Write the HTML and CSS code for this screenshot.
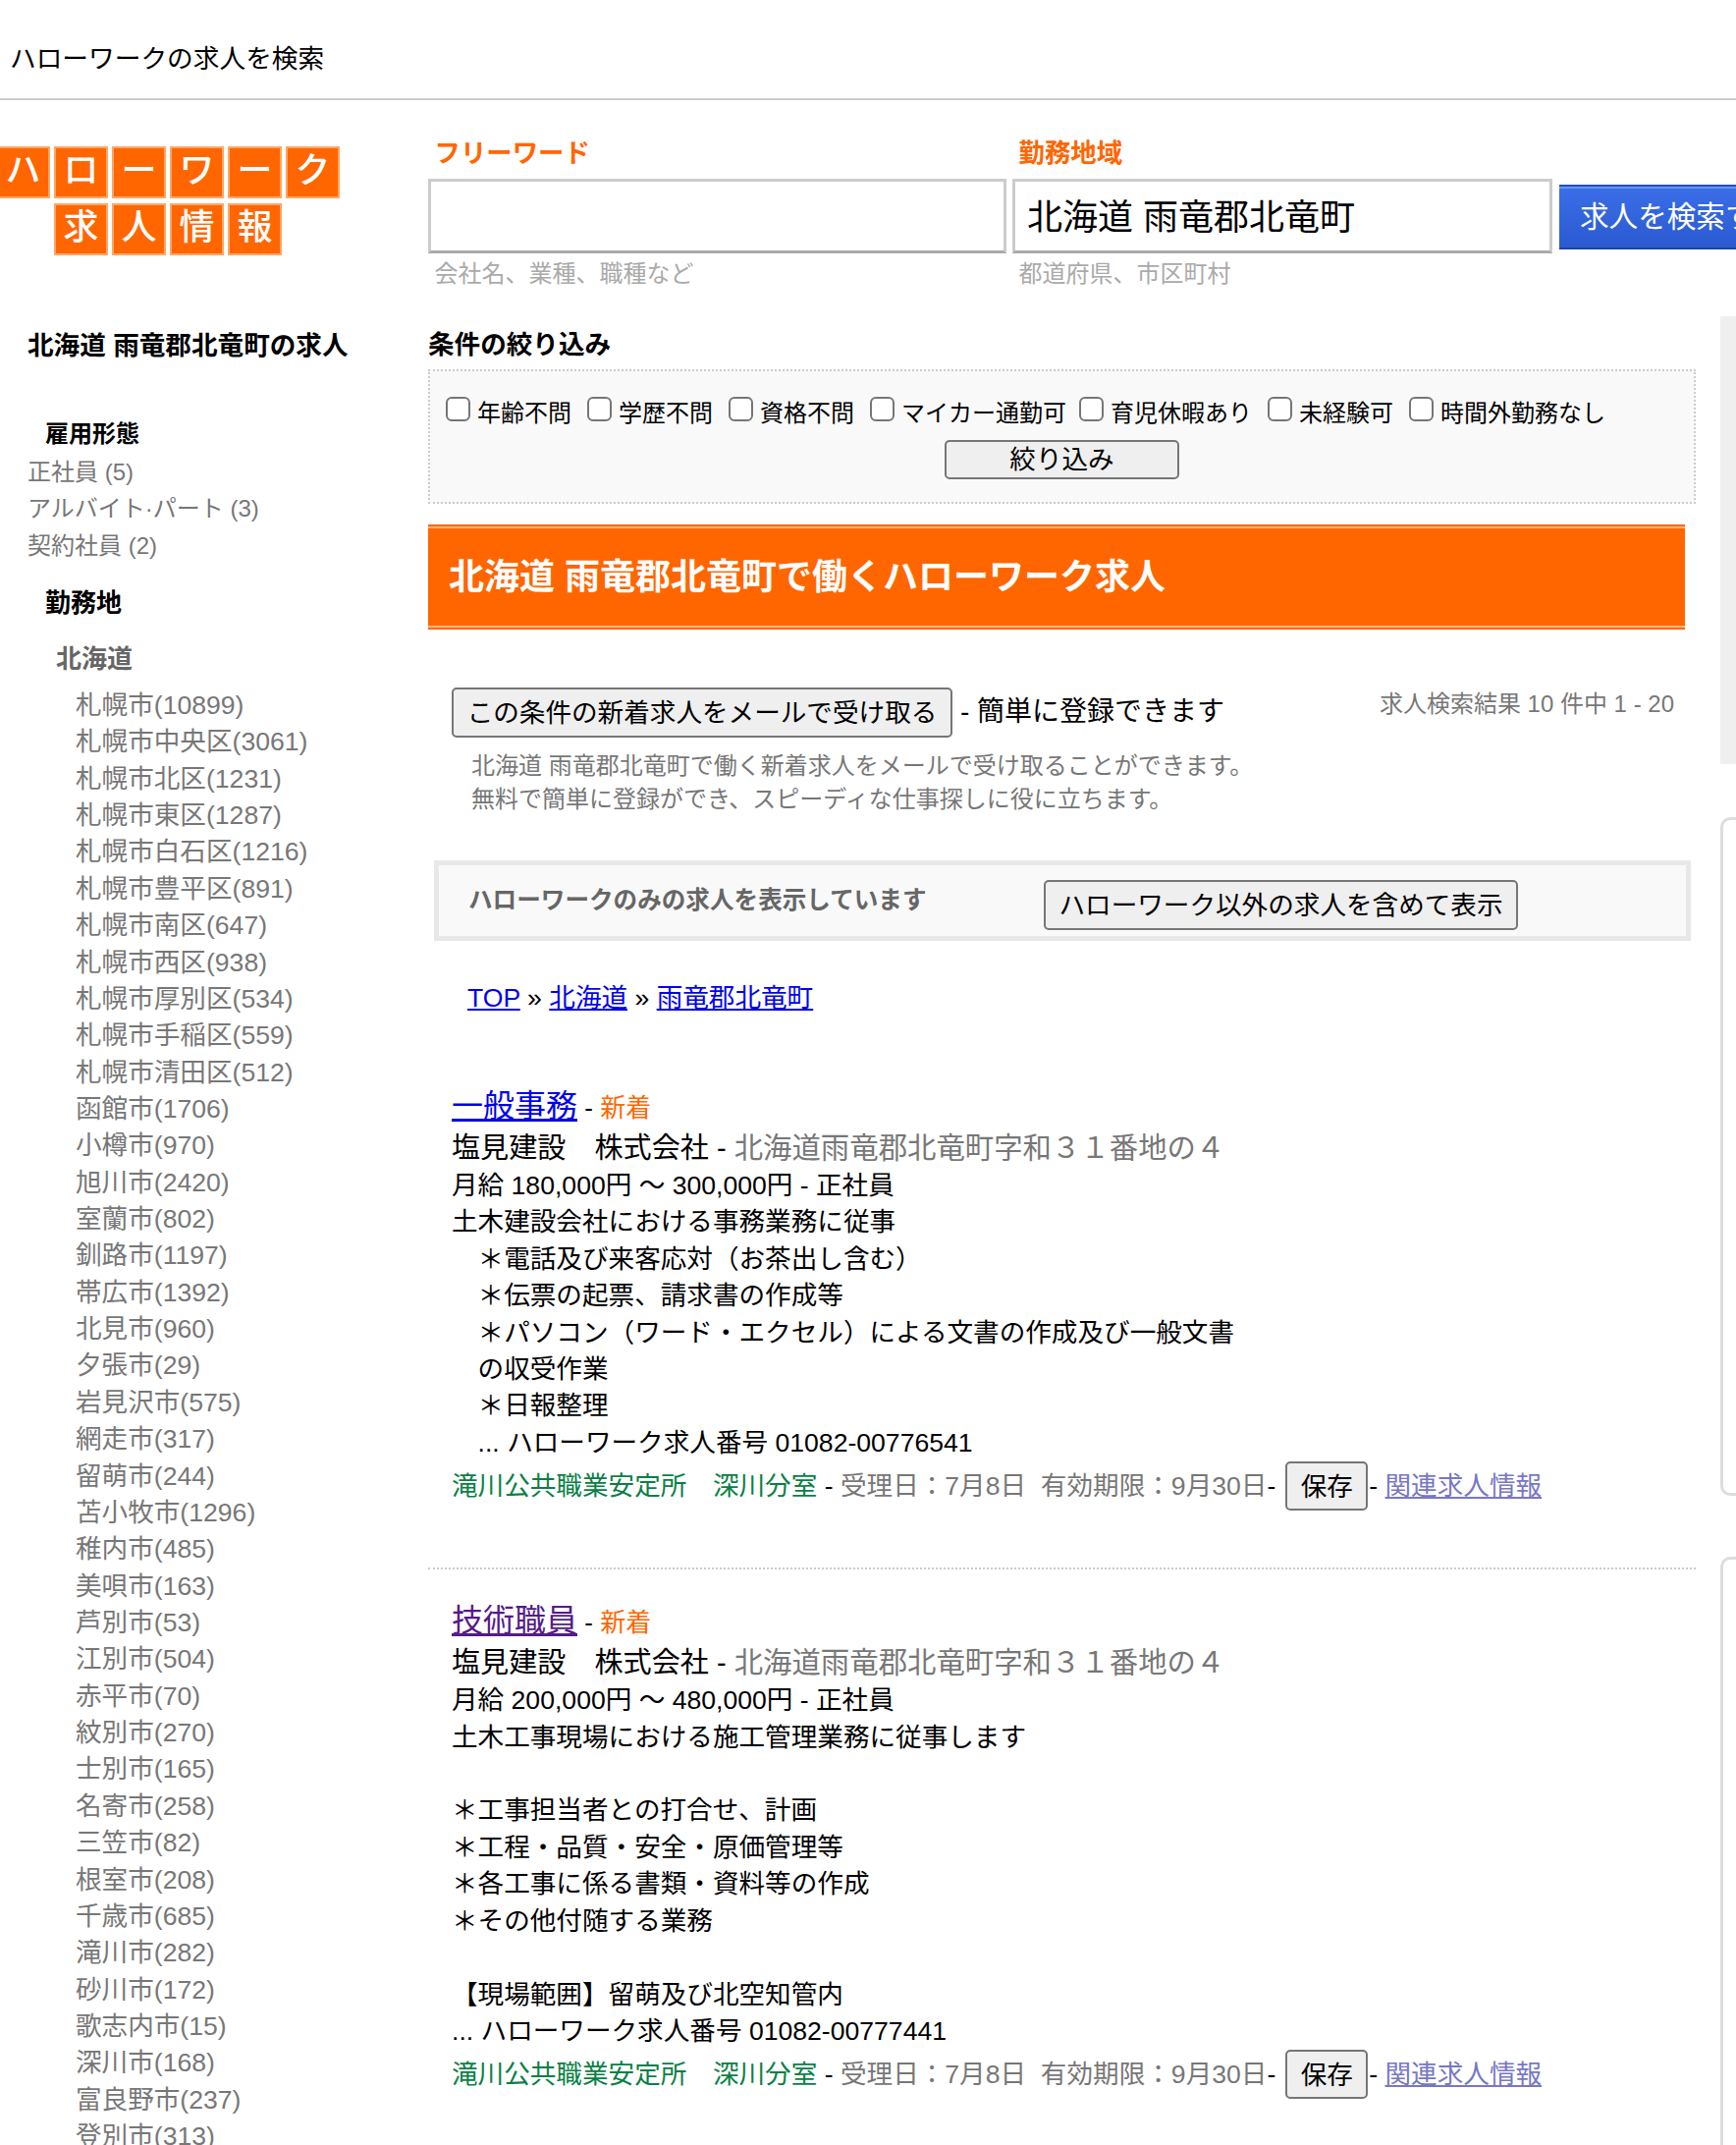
FILE: index.html
```html
<!DOCTYPE html>
<html lang="ja">
<head>
<meta charset="utf-8">
<title>ハローワークの求人を検索</title>
<link rel="stylesheet" href="styles.css">
</head>
<body>
<header class="topbar">ハローワークの求人を検索</header>
<div class="page">
  <aside class="side">
    <div class="logo">
      <div class="logo-row"><span>ハ</span><span>ロ</span><span>ー</span><span>ワ</span><span>ー</span><span>ク</span></div>
      <div class="logo-row logo-row2"><span>求</span><span>人</span><span>情</span><span>報</span></div>
    </div>
    <h2 class="side-title">北海道 雨竜郡北竜町の求人</h2>
    <h3 class="side-h emp">雇用形態</h3>
    <ul class="emp-list">
      <li>正社員 (5)</li>
      <li>アルバイト·パート (3)</li>
      <li>契約社員 (2)</li>
    </ul>
    <h3 class="side-h loc">勤務地</h3>
    <h4 class="pref">北海道</h4>
    <ul class="city-list">
      <li>札幌市(10899)</li><li>札幌市中央区(3061)</li><li>札幌市北区(1231)</li><li>札幌市東区(1287)</li><li>札幌市白石区(1216)</li><li>札幌市豊平区(891)</li><li>札幌市南区(647)</li><li>札幌市西区(938)</li><li>札幌市厚別区(534)</li><li>札幌市手稲区(559)</li><li>札幌市清田区(512)</li><li>函館市(1706)</li><li>小樽市(970)</li><li>旭川市(2420)</li><li>室蘭市(802)</li><li>釧路市(1197)</li><li>帯広市(1392)</li><li>北見市(960)</li><li>夕張市(29)</li><li>岩見沢市(575)</li><li>網走市(317)</li><li>留萌市(244)</li><li>苫小牧市(1296)</li><li>稚内市(485)</li><li>美唄市(163)</li><li>芦別市(53)</li><li>江別市(504)</li><li>赤平市(70)</li><li>紋別市(270)</li><li>士別市(165)</li><li>名寄市(258)</li><li>三笠市(82)</li><li>根室市(208)</li><li>千歳市(685)</li><li>滝川市(282)</li><li>砂川市(172)</li><li>歌志内市(15)</li><li>深川市(168)</li><li>富良野市(237)</li><li>登別市(313)</li>
    </ul>
  </aside>
  <div class="main">
    <form class="search">
      <div class="field field-word">
        <label class="field-label">フリーワード</label>
        <input class="field-input" type="text">
        <div class="field-hint">会社名、業種、職種など</div>
      </div>
      <div class="field field-area">
        <label class="field-label">勤務地域</label>
        <input class="field-input" type="text" value="北海道 雨竜郡北竜町">
        <div class="field-hint">都道府県、市区町村</div>
      </div>
      <button class="search-btn" type="button">求人を検索する</button>
    </form>
    <div class="content">
      <main class="results">
        <h3 class="filter-title">条件の絞り込み</h3>
        <div class="filter">
          <div class="filter-row">
            <label class="check"><input type="checkbox">年齢不問</label>
            <label class="check"><input type="checkbox">学歴不問</label>
            <label class="check"><input type="checkbox">資格不問</label>
            <label class="check check-kana"><input type="checkbox">マイカー通勤可</label>
            <label class="check"><input type="checkbox">育児休暇あり</label>
            <label class="check"><input type="checkbox">未経験可</label>
            <label class="check"><input type="checkbox">時間外勤務なし</label>
          </div>
          <button class="btn filter-btn" type="button">絞り込み</button>
        </div>
        <div class="banner"><h1 class="banner-in">北海道 雨竜郡北竜町で働くハローワーク求人</h1></div>
        <div class="subscribe">
          <button class="btn sub-btn" type="button">この条件の新着求人をメールで受け取る</button>
          <span class="sub-note">- 簡単に登録できます</span>
          <span class="count">求人検索結果 10 件中 1 - 20</span>
        </div>
        <p class="sub-desc">北海道 雨竜郡北竜町で働く新着求人をメールで受け取ることができます。<br>無料で簡単に登録ができ、スピーディな仕事探しに役に立ちます。</p>
        <div class="notice">
          <span class="notice-text">ハローワークのみの求人を表示しています</span>
          <button class="btn notice-btn" type="button">ハローワーク以外の求人を含めて表示</button>
        </div>
        <nav class="crumb"><a href="#">TOP</a> » <a href="#">北海道</a> » <a href="#">雨竜郡北竜町</a></nav>
        <article class="job job-first">
          <div class="job-title"><a href="#">一般事務</a> - <span class="new">新着</span></div>
          <div class="job-co">塩見建設　株式会社 - <span class="addr">北海道雨竜郡北竜町字和３１番地の４</span></div>
          <p class="job-body">月給 180,000円 〜 300,000円 - 正社員<br>土木建設会社における事務業務に従事<br>　＊電話及び来客応対（お茶出し含む）<br>　＊伝票の起票、請求書の作成等<br>　＊パソコン（ワード・エクセル）による文書の作成及び一般文書<br>　の収受作業<br>　＊日報整理<br>　... ハローワーク求人番号 01082-00776541</p>
          <div class="job-foot"><span class="office">滝川公共職業安定所　深川分室</span> - <span class="dates">受理日：7月8日&nbsp;&nbsp;有効期限：9月30日</span>-<button class="btn save-btn" type="button">保存</button>- <a class="related" href="#">関連求人情報</a></div>
        </article>
        <hr class="divider">
        <article class="job">
          <div class="job-title"><a class="visited" href="#">技術職員</a> - <span class="new">新着</span></div>
          <div class="job-co">塩見建設　株式会社 - <span class="addr">北海道雨竜郡北竜町字和３１番地の４</span></div>
          <p class="job-body">月給 200,000円 〜 480,000円 - 正社員<br>土木工事現場における施工管理業務に従事します<br><br>＊工事担当者との打合せ、計画<br>＊工程・品質・安全・原価管理等<br>＊各工事に係る書類・資料等の作成<br>＊その他付随する業務<br><br>【現場範囲】留萌及び北空知管内<br>... ハローワーク求人番号 01082-00777441</p>
          <div class="job-foot"><span class="office">滝川公共職業安定所　深川分室</span> - <span class="dates">受理日：7月8日&nbsp;&nbsp;有効期限：9月30日</span>-<button class="btn save-btn" type="button">保存</button>- <a class="related" href="#">関連求人情報</a></div>
        </article>
      </main>
      <div class="rail">
        <div class="rail-block"></div>
        <div class="rail-panel rail-panel1"></div>
        <div class="rail-panel rail-panel2"></div>
      </div>
    </div>
  </div>
</div>
</body>
</html>
```
FILE: styles.css
```css
* { box-sizing: border-box; }
html, body { margin: 0; padding: 0; overflow: hidden; }
body {
  width: 1768px;
  height: 2184px;
  background: #fff;
  color: #000;
  font-family: "Liberation Sans", "Noto Sans CJK JP", sans-serif;
  font-size: 26.6px;
  line-height: 38px;
}
h1, h2, h3, h4, p, ul { margin: 0; padding: 0; }
ul { list-style: none; }
a { color: #0000ee; text-decoration: underline; }

.topbar {
  height: 102px;
  padding: 41px 0 0 10px;
  font-size: 26.7px;
  line-height: 38px;
  border-bottom: 2px solid #ccc;
}

.page { display: grid; grid-template-columns: 436px 1332px; padding-top: 15px; }

.side { min-width: 0; }
.logo { margin: 32px 0 0 -4px; }
.logo-row { display: flex; gap: 4px; }
.logo-row2 { margin: 5px 0 0 59px; }
.logo-row span {
  width: 55px;
  height: 53px;
  background: #f60;
  border: 2px solid #ffa766;
  color: #fff;
  font-size: 36px;
  font-weight: 500;
  line-height: 46px;
  text-align: center;
}
.side-title { margin: 73px 0 0 28px; font-size: 26.6px; font-weight: 700; line-height: 38px; }
.side-h { font-weight: 700; line-height: 38px; margin-left: 46px; }
.emp { margin-top: 52px; font-size: 24px; }
.emp-list { margin: 0.5px 0 0 28px; color: #777; font-size: 24px; line-height: 37.5px; }
.loc { margin-top: 20.5px; font-size: 26px; }
.pref { margin: 19px 0 0 57px; font-size: 26px; font-weight: 700; line-height: 38px; color: #666; }
.city-list { margin: 10.5px 0 0 77px; color: #777; font-size: 26.6px; line-height: 37.36px; white-space: nowrap; }

.main { min-width: 0; }

.search { display: flex; align-items: flex-start; gap: 6px; padding-top: 20px; white-space: nowrap; }
.field { flex: none; }
.field-word { width: 589px; }
.field-area { width: 550px; }
.field-label { display: block; padding-left: 6.5px; color: #f60; font-size: 26.4px; font-weight: 700; line-height: 38px; }
.field-input {
  display: block;
  width: 100%;
  height: 76px;
  margin-top: 7px;
  padding: 0 12px 4px;
  background: #fff;
  border: 3px solid #ccc;
  border-bottom-color: #aaa;
  border-radius: 0;
  color: #000;
  font: 36px "Liberation Sans", "Noto Sans CJK JP", sans-serif;
  outline: 0;
}
.field-hint { margin-top: 4px; padding-left: 6.5px; color: #aaa; font-size: 24px; line-height: 34px; }
.search-btn {
  flex: none;
  width: 250px;
  height: 66px;
  margin: 51px 0 0 1px;
  padding: 0 0 6px 21px;
  border: 0;
  border-top: 2px solid #1f4fc2;
  border-bottom: 2px solid #1a44a8;
  box-shadow: inset 0 2px 0 #6a92f0;
  background: linear-gradient(#3a6ee8, #2b5ad0);
  color: #fff;
  font: 29.6px "Liberation Sans", "Noto Sans CJK JP", sans-serif;
  text-align: left;
  white-space: nowrap;
}

.content { display: grid; grid-template-columns: 1316px 16px; margin-top: 26px; }
.results { padding-top: 10px; min-width: 0; }

.filter-title { font-size: 26.6px; font-weight: 700; line-height: 38px; }
.filter {
  width: 1291px;
  height: 137px;
  margin-top: 6px;
  padding-top: 24px;
  background: #f9f9f9;
  border: 2px dotted #ccc;
}
.filter-row { display: flex; gap: 16px; height: 38px; padding-left: 16px; white-space: nowrap; }
.check { display: flex; align-items: center; gap: 7px; font-size: 24px; line-height: 38px; }
.check-kana { margin-right: -3px; }
.check input {
  appearance: none;
  width: 25px;
  height: 25px;
  margin: 0 0 9px;
  background: #fff;
  border: 2px solid #767676;
  border-radius: 6px;
}
.btn {
  background: #efefef;
  border: 2px solid #767676;
  border-radius: 5px;
  color: #000;
  font: 26.6px "Liberation Sans", "Noto Sans CJK JP", sans-serif;
  padding: 0 0 4px;
  white-space: nowrap;
}
.filter-btn { display: block; width: 239px; height: 40px; margin: 8px auto 0; padding-bottom: 1px; line-height: 32px; }

.banner { width: 1280px; height: 107px; margin-top: 21px; padding: 2px 0; background: #f60; }
.banner-in {
  display: flex;
  align-items: center;
  height: 103px;
  padding-left: 21px;
  border-top: 2px solid #ffb380;
  border-bottom: 2px solid #ffb380;
  color: #fff;
  font-size: 36px;
  font-weight: 700;
  line-height: 44px;
}

.subscribe { display: flex; align-items: flex-start; width: 1280px; margin-top: 59px; padding: 0 11px 0 24px; white-space: nowrap; }
.sub-btn { width: 510px; height: 51px; }
.sub-note { margin-left: 8px; font-size: 28px; line-height: 50px; }
.count { margin-left: auto; color: #777; font-size: 24px; line-height: 34px; }
.sub-desc { margin-top: 12px; padding-left: 44px; color: #777; font-size: 24px; line-height: 33.5px; }

.notice {
  display: flex;
  align-items: flex-start;
  width: 1280px;
  height: 82px;
  margin: 46px 0 0 6px;
  padding: 15px 0 0 30px;
  background: #f9f9f9;
  border: 5px solid #e8e8e8;
  white-space: nowrap;
}
.notice-text { flex: none; width: 586px; margin-top: 2px; color: #666; font-size: 24.6px; font-weight: 700; line-height: 38px; }
.notice-btn { width: 483px; height: 51px; }

.crumb { margin-top: 39px; padding-left: 40px; line-height: 38px; }

.job { padding-left: 24px; margin-top: 30px; }
.job-first { margin-top: 69px; }
.job-title { font-size: 26px; line-height: 44px; }
.job-title a { font-size: 32px; }
.job-title a.visited { color: #551a8b; }
.new { color: #f60; }
.job-co { font-size: 29.1px; line-height: 38px; }
.addr { color: #777; font-size: 29.4px; }
.job-body { margin-top: 1px; font-size: 26.6px; line-height: 37.4px; white-space: nowrap; }
.job-foot { display: flex; align-items: center; height: 50px; margin-top: 0; white-space: pre; }
.office { color: #0a7f45; }
.dates { color: #777; }
.save-btn { width: 84px; height: 50px; margin: 0 1px 0 10px; }
.related { color: #7777c4; }

.divider { width: 1291px; height: 0; margin: 58px 0 0; border: 0; border-top: 2px dotted #ccc; }

.rail { display: flex; flex-direction: column; }
.rail-block { height: 456px; background: #efefef; }
.rail-panel { background: #fff; border: 3px solid #ddd; border-right: 0; border-radius: 10px 0 0 10px; }
.rail-panel1 { height: 691px; margin-top: 54px; }
.rail-panel2 { height: 700px; margin-top: 62px; }
```
